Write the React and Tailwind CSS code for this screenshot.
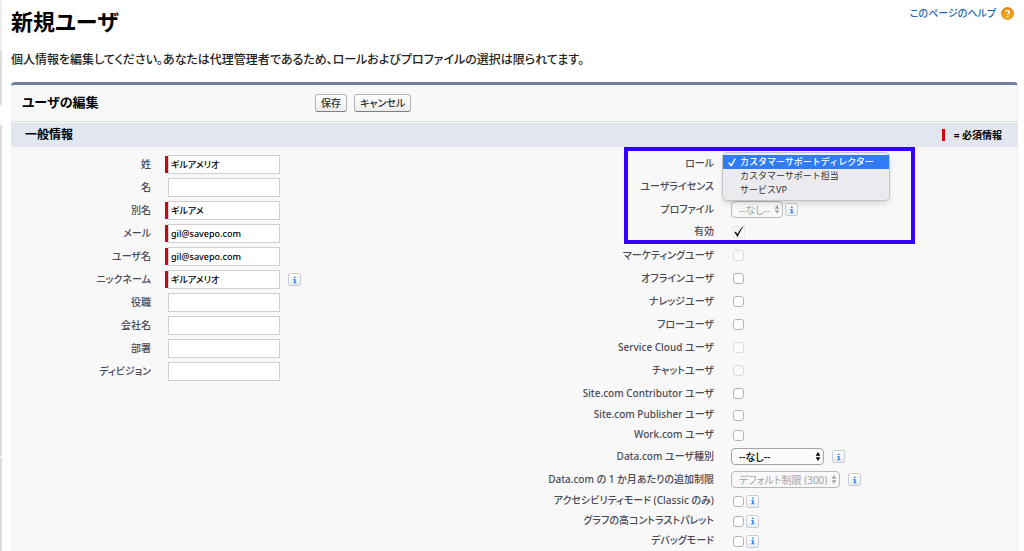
import React, { useState } from "react";

const leftFields = [
  { id: "lastName", label: "姓", value: "ギルアメリオ", required: true },
  { id: "firstName", label: "名", value: "" },
  { id: "alias", label: "別名", value: "ギルアメ", required: true },
  { id: "email", label: "メール", value: "gil@savepo.com", required: true },
  { id: "username", label: "ユーザ名", value: "gil@savepo.com", required: true },
  { id: "nickname", label: "ニックネーム", value: "ギルアメリオ", required: true, info: true },
  { id: "title", label: "役職", value: "" },
  { id: "company", label: "会社名", value: "" },
  { id: "department", label: "部署", value: "" },
  { id: "division", label: "ディビジョン", value: "" },
];

const userFlags = [
  { id: "marketing", label: "マーケティングユーザ", disabled: true },
  { id: "offline", label: "オフラインユーザ" },
  { id: "knowledge", label: "ナレッジユーザ" },
  { id: "flow", label: "フローユーザ" },
  { id: "serviceCloud", label: "Service Cloud ユーザ", disabled: true },
  { id: "chat", label: "チャットユーザ", disabled: true },
  { id: "contributor", label: "Site.com Contributor ユーザ" },
];

const siteFlags = [
  { id: "publisher", label: "Site.com Publisher ユーザ" },
  { id: "work", label: "Work.com ユーザ" },
];

const modeFlags = [
  { id: "accessibility", label: "アクセシビリティモード (Classic のみ)" },
  { id: "contrast", label: "グラフの高コントラストパレット" },
  { id: "debug", label: "デバッグモード" },
];

const roles = ["カスタマーサポートディレクター", "カスタマーサポート担当", "サービスVP"];

const InfoButton = () => (
  <button
    type="button"
    aria-label="i"
    className="flex h-[13px] w-[13px] shrink-0 items-center justify-center rounded-[2px] border border-[#c9ccd2] bg-linear-to-b from-white to-[#e9ecf1]"
  >
    <svg viewBox="0 0 7 9" className="h-[8px] w-[6px]" fill="#2f86e6">
      <rect x="2.2" y="0.6" width="2" height="1.6" />
      <path d="M1.2 3.3h3v4.1h1.2v1H1.2v-1h1.2V4.3H1.2z" />
    </svg>
  </button>
);

const Select = ({ id, options, disabled, className }) => (
  <span className={`relative inline-flex ${className}`}>
    <select
      id={id}
      disabled={disabled}
      className={`h-[17px] w-full appearance-none rounded-[4px] border pl-[7px] text-[10px] leading-none ${
        disabled ? "border-[#b9b9b9] bg-[#f8f8f8] text-[#a3a3a3]" : "border-[#a3a3a3] bg-[#fbfbfb] font-medium text-black"
      }`}
    >
      {options.map((option) => (
        <option key={option}>{option}</option>
      ))}
    </select>
    <svg
      viewBox="0 0 6 10"
      className={`pointer-events-none absolute top-[4px] right-[3px] h-[9px] w-[6px] ${disabled ? "fill-[#a3a3a3]" : "fill-black"}`}
    >
      <path d="M3 0 5.6 4.2H.4zM3 10 .4 5.8h5.2z" />
    </svg>
  </span>
);

// Zeile der rechten Spalte
const Row = ({ id, label, height = "h-[23px]", children }) => (
  <div className={`flex items-center ${height}`}>
    <label htmlFor={id} className="w-50 shrink-0 pb-0.5 text-right text-[10px] leading-[12px] font-medium whitespace-nowrap text-[#4a4a56]">
      {label}
    </label>
    <div className="flex items-center pl-[17px]">{children}</div>
  </div>
);

const FlagRow = ({ flag, height, info }) => (
  <Row id={flag.id} label={flag.label} height={height}>
    <input
      id={flag.id}
      type="checkbox"
      disabled={flag.disabled}
      className="mr-[2px] ml-[2px] h-[11px] w-[11px] appearance-none rounded-[3px] border border-[#b4b4b4] bg-white checked:bg-[#2f7cf6] disabled:border-[#dcdcdc] disabled:bg-[#fbfbfb]"
    />
    {info && <InfoButton />}
  </Row>
);

const App = () => {
  const [values, setValues] = useState(Object.fromEntries(leftFields.map(({ id, value }) => [id, value])));
  const [role, setRole] = useState(roles[0]);

  return (
    <div
      lang="ja"
      className="flex h-screen overflow-hidden bg-white font-['Noto_Sans','Noto_Sans_CJK_JP',sans-serif] text-black [font-feature-settings:'palt']"
    >
      {/* Rand der Seitenleiste */}
      <div className="flex w-[2px] shrink-0 flex-col">
        <div className="h-[51px] bg-[#ececec]" />
        <div className="mb-5 h-[54px] bg-[#dcdcdc]" />
        <div className="mb-px h-[331px] bg-[#dcdcdc]" />
        <div className="flex-1 bg-[#dcdcdc]" />
      </div>

      <main className="min-w-0 flex-1 pr-[6px] pl-[9px]">
        <header className="flex h-[44px] items-start justify-between">
          <h1 className="pt-[6px] text-[22px] leading-[30px] font-bold">新規ユーザ</h1>
          <a href="#help" className="flex items-center gap-[5px] pt-[6px] pr-1 text-[10px] leading-[14px] font-medium text-[#1568b8]">
            このページのヘルプ
            <svg viewBox="0 0 14 14" className="h-[13px] w-[13px]">
              <defs>
                <linearGradient id="helpFill" x1="0" y1="0" x2="0" y2="1">
                  <stop offset="0" stopColor="#e08512" />
                  <stop offset="1" stopColor="#ffb21c" />
                </linearGradient>
              </defs>
              <circle cx="7" cy="7" r="6.5" fill="url(#helpFill)" stroke="#cf7d12" strokeWidth="0.8" />
              <path d="M5 5.4C5 3 9 3 9 5.3 9 6.8 7.1 6.7 7.1 8.4" fill="none" stroke="#fff" strokeWidth="1.5" />
              <circle cx="7.1" cy="10.4" r="0.9" fill="#fff" />
            </svg>
          </a>
        </header>

        <p className="h-[38px] pt-[6px] text-[12px] leading-[20px] font-medium whitespace-nowrap text-[#222]">
          個人情報を編集してください。あなたは代理管理者であるため、ロールおよびプロファイルの選択は限られてます。
        </p>

        <form className="rounded-t-[4px] border-t-[3px] border-r border-t-[#747e9f] border-r-[#eaeaea] bg-[#f8f8f8]">
          <div className="flex h-[37px] items-center border-b border-[#e0e0e0]">
            <h2 className="w-76 pl-[11px] text-[13px] font-bold">ユーザの編集</h2>
            <div className="flex gap-[7px]">
              {["保存", "キャンセル"].map((text) => (
                <button
                  key={text}
                  type="button"
                  className="h-[18px] rounded-[3px] border border-[#b5b5b5] border-b-[#7f7f7f] bg-linear-to-b from-white to-[#ececec] px-[5px] text-[10px] leading-none font-medium text-[#333]"
                >
                  {text}
                </button>
              ))}
            </div>
          </div>

          <div className="mt-px flex h-[24px] items-center justify-between bg-[#e2e6ef] pr-[15px] pl-[14px]">
            <h3 className="text-[12px] font-bold">一般情報</h3>
            <span className="flex items-center gap-[9px] text-[10px] font-bold">
              <span className="h-[12px] w-[3px] bg-[#d8000c]" />= 必須情報
            </span>
          </div>

          <div className="grid grid-cols-2">
            {/* Linke Spalte */}
            <div className="pt-[6px]">
              {leftFields.map(({ id, label, required, info }) => (
                <div key={id} className="flex h-[23px] items-center">
                  <label htmlFor={id} className="w-35 shrink-0 pb-0.5 text-right text-[10px] leading-[12px] font-medium text-[#4a4a56]">
                    {label}
                  </label>
                  <span className={`ml-[14px] h-[17px] w-[3px] ${required ? "bg-[#d8000c]" : ""}`} />
                  <input
                    id={id}
                    type="text"
                    value={values[id]}
                    onChange={(e) => setValues({ ...values, [id]: e.target.value })}
                    className="mr-2 h-[19px] w-28 border border-[#d0d0d0] bg-white px-[2px] text-[9px] font-medium"
                  />
                  {info && <InfoButton />}
                </div>
              ))}
            </div>

            {/* Rechte Spalte */}
            <div>
              <div className="relative pt-[5px] pb-px">
                <Row id="role" label="ロール">
                  <Select id="role" options={[""]} className="w-[93px]" />
                </Row>
                <Row id="license" label="ユーザライセンス">
                  <Select id="license" options={[""]} className="w-[93px]" />
                </Row>
                <Row id="profile" label="プロファイル">
                  <Select id="profile" options={["--なし--"]} disabled className="mr-[2px] w-[52px]" />
                  <InfoButton />
                </Row>
                <Row id="active" label="有効" height="h-[22px]">
                  <span className="relative ml-[2px] flex h-[12px] w-[12px]">
                    <input id="active" type="checkbox" defaultChecked className="h-[12px] w-[12px] appearance-none border border-dotted border-[#dcdcdc]" />
                    <svg viewBox="0 0 12 12" className="pointer-events-none absolute inset-0">
                      <path d="M1.4 6.4 2.8 5.6 4.4 8.2C5.8 5 7.8 2.2 10.2.4L10.6.8C8.4 3.4 6.4 6.8 5 10.6H4C3.4 9 2.6 7.6 1.4 6.4z" fill="#111" />
                    </svg>
                  </span>
                </Row>
                <div className="pointer-events-none absolute inset-y-0 left-[110px] w-[291px] border-4 border-[#3300ff]" />

                {/* Geöffnete Rollenauswahl */}
                <ul
                  role="listbox"
                  className="absolute top-[5px] left-[208px] w-[168px] rounded-[5px] border border-[#c4c4c8] bg-[#ebebef] pt-[2px] pb-[3px] text-[9px] leading-[14px] shadow-md [font-feature-settings:normal]"
                >
                  {roles.map((name) => (
                    <li
                      key={name}
                      role="option"
                      aria-selected={name === role}
                      onClick={() => setRole(name)}
                      className={`relative pl-[17px] whitespace-nowrap ${name === role ? "bg-[#2f7cf6] font-medium text-white" : "text-[#333]"}`}
                    >
                      {name === role && (
                        <svg viewBox="0 0 8 9" className="absolute top-[3px] left-[5px] h-[9px] w-[8px]">
                          <path d="M1 5 3.2 7.8 7 1" fill="none" stroke="#fff" strokeWidth="1.4" strokeLinecap="round" strokeLinejoin="round" />
                        </svg>
                      )}
                      {name}
                    </li>
                  ))}
                </ul>
              </div>

              {userFlags.map((flag) => (
                <FlagRow key={flag.id} flag={flag} />
              ))}
              {siteFlags.map((flag) => (
                <FlagRow key={flag.id} flag={flag} height="h-[20px]" />
              ))}
              <Row id="dataType" label="Data.com ユーザ種別">
                <Select id="dataType" options={["--なし--"]} className="mr-2 w-[93px]" />
                <InfoButton />
              </Row>
              <Row id="dataLimit" label="Data.com の 1 か月あたりの追加制限">
                <Select id="dataLimit" options={["デフォルト制限 (300)"]} disabled className="mr-2 w-[109px]" />
                <InfoButton />
              </Row>
              {modeFlags.map((flag) => (
                <FlagRow key={flag.id} flag={flag} height="h-[20px]" info />
              ))}
            </div>
          </div>
        </form>
      </main>
    </div>
  );
};

export default App;
